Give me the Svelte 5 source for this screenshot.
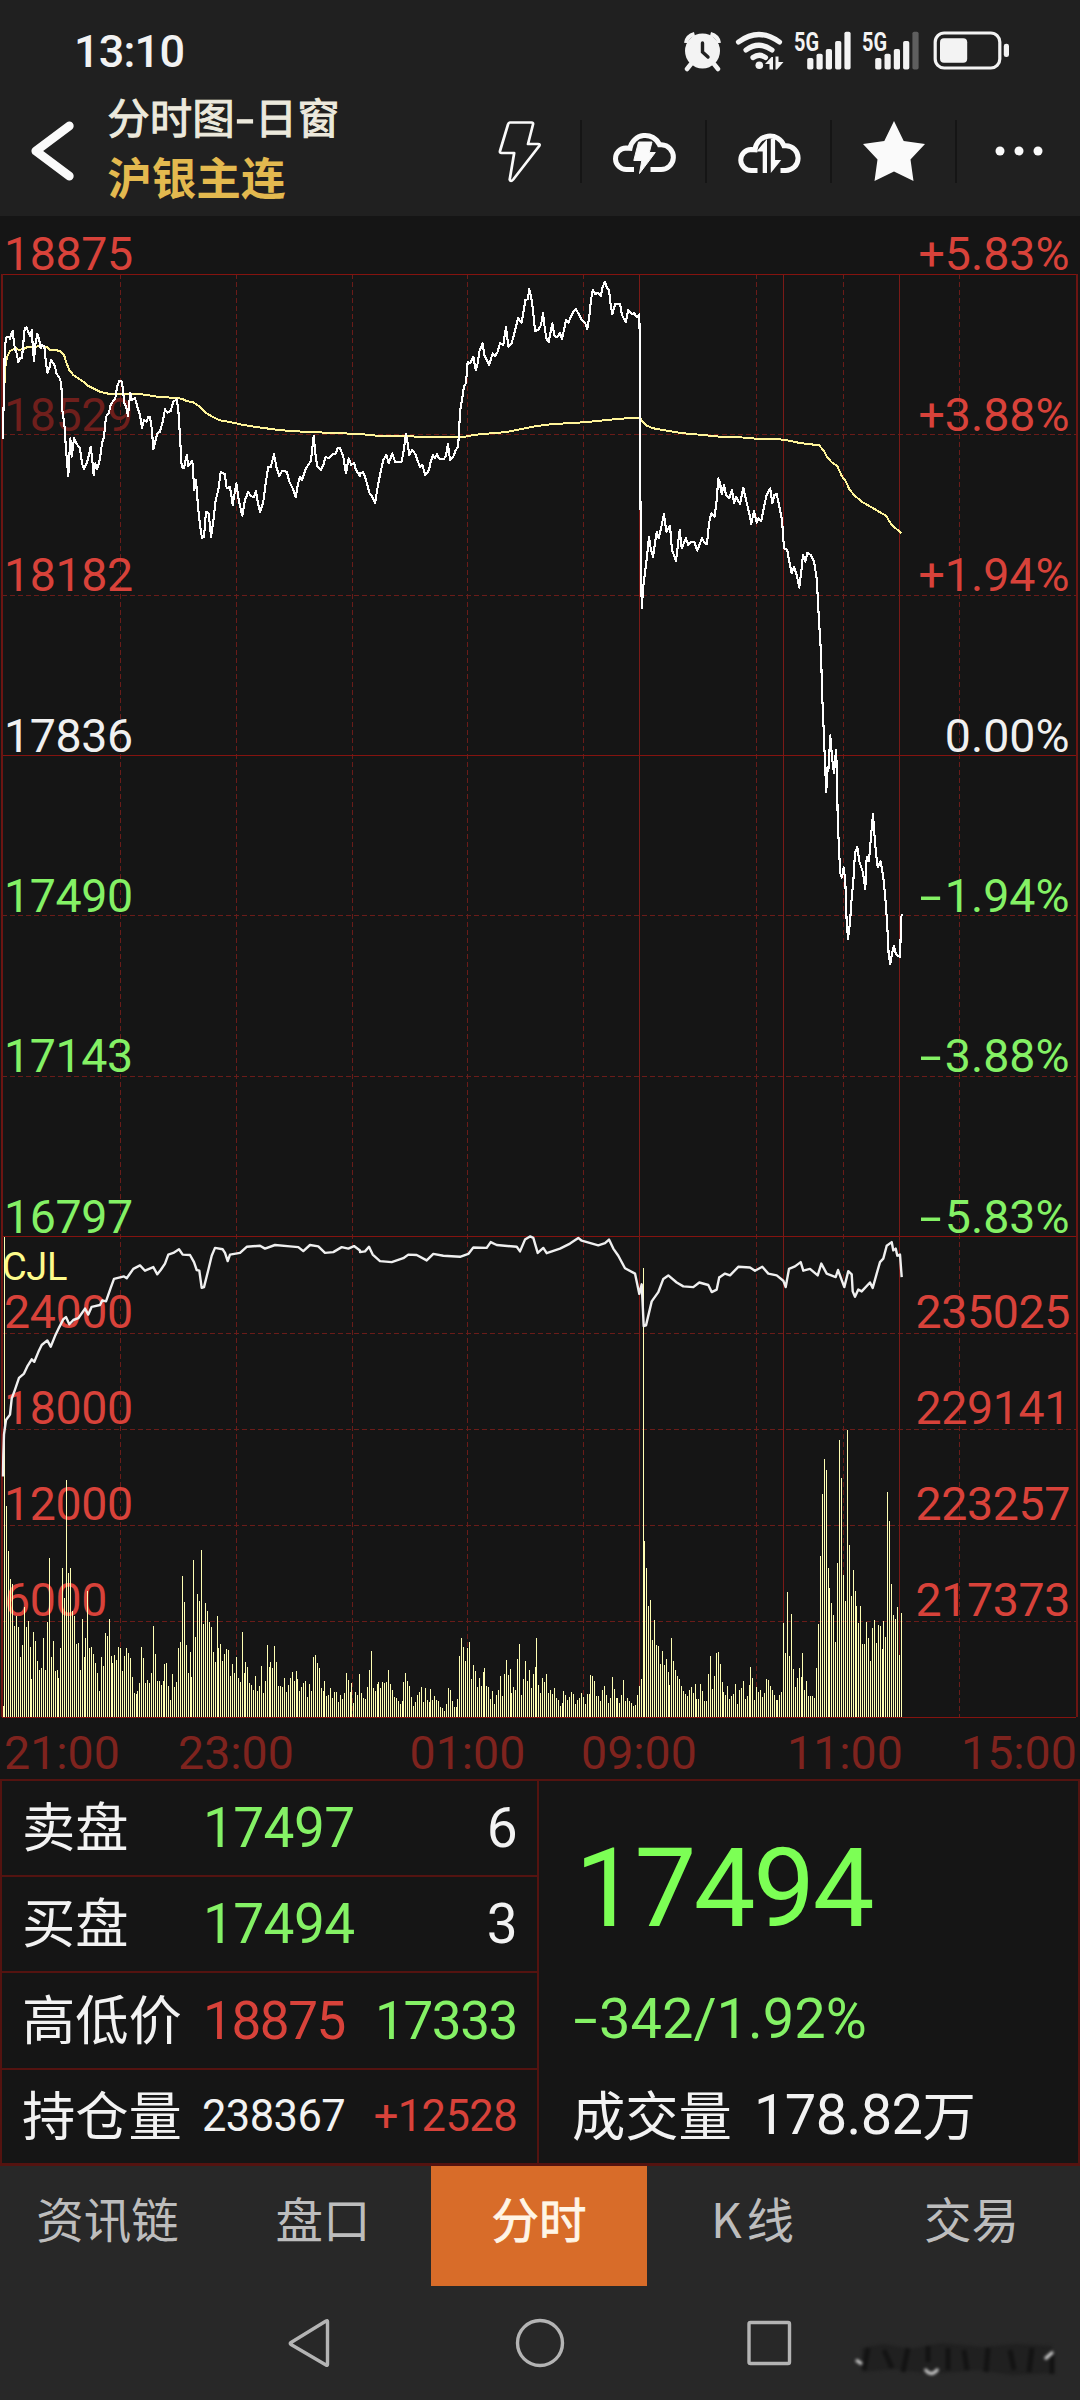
<script lang="ts">
  /* Intraday quote screen: header toolbar, price + volume chart, quote table, tabs. */
  const rows = [
    { y: 274, price: "18875", pct: "+5.83%", tone: "up" },
    { y: 434.5, price: "18529", pct: "+3.88%", tone: "up" },
    { y: 595, price: "18182", pct: "+1.94%", tone: "up" },
    { y: 755.5, price: "17836", pct: "0.00%", tone: "flat" },
    { y: 915.5, price: "17490", pct: "-1.94%", tone: "down" },
    { y: 1076, price: "17143", pct: "-3.88%", tone: "down" },
    { y: 1236.5, price: "16797", pct: "-5.83%", tone: "down" },
  ];
  const volRows = [
    { y: 1333, vol: "24000", oi: "235025" },
    { y: 1429, vol: "18000", oi: "229141" },
    { y: 1525, vol: "12000", oi: "223257" },
    { y: 1621, vol: "6000", oi: "217373" },
  ];
  const times = [
    { x: 62, t: "21:00" },
    { x: 236, t: "23:00" },
    { x: 467.5, t: "01:00" },
    { x: 639, t: "09:00" },
    { x: 845, t: "11:00" },
    { x: 1019, t: "15:00" },
  ];
  const dashedX = [120.5, 236.5, 352, 467.5, 583.5, 756.5, 843.5, 959.5];
  const solidX = [639.5, 783.5, 899.5];

  // each panel: [x offset, y offset, x scale, y scale, "x,y x,y ..."]
  type Panel = [number, number, number, number, string];
  const price: Panel[] = [
    [0, 220, 3, 3, "9,657 10,590 13,480 14,380 20,350 27,350 30,358 34,340 38,333 42,370 46,390 50,400 55,427 60,415 66,413 70,370 74,325 80,322 84,335 90,347 96,330 98,380 102,423 106,375 112,342 117,355 122,385 127,375 133,380 137,420 142,458 148,445 153,420 160,430 165,440 170,462 178,472 184,490 187,570 193,610 198,690 205,768 211,655 215,710 222,655 230,672 240,685 246,730 252,748 262,725 272,680 276,712 281,765 286,730 292,747 300,715 306,670 312,650 318,590 326,580 332,555 340,542 346,535 352,498 358,483 366,485 370,520 373,550 378,558 384,587 391,518 396,540 405,535 412,560 420,585 426,623 432,600 440,605 445,590 450,592 456,630 460,688 466,665 472,640 480,635 488,605 495,568 502,578 512,573 520,545 530,538 535,570 540,650 545,740 552,745 560,705 565,738 577,722 583,810 588,780 594,860 600,915 606,955 612,950 618,875 626,880 633,950 640,905 647,840 655,810 662,757 674,762 680,805 690,800 698,855 709,790 716,840 727,887 735,840 745,815 752,828 762,832 768,812 773,845 780,877 790,845 797,790 805,740 812,742 822,703 830,745 838,768 847,752 860,755 868,785 878,805 887,832 893,795 900,770 906,780 918,745 933,722 941,648 946,700 952,740 962,750 970,735 977,710 985,715 1000,702 1008,700 1012,685 1020,685 1030,710 1038,760 1046,715 1054,735 1062,728 1068,750 1080,768"],
    [360, 220, 3, 3, "0,760 10,757 18,780 28,818 36,828 45,850 54,795 62,755 70,720 79,705 86,730 97,700 105,725 125,725 131,690 138,643 143,670 148,705 156,690 166,702 172,720 180,740 187,735 196,766 207,750 212,725 219,705 224,715 231,703 236,715 250,718 257,710 264,672 270,720 280,710 287,690 294,682 297,640 300,575 306,540 312,500 318,490 323,425 331,430 340,410 347,450 353,430 358,395 368,370 373,405 380,420 387,435 398,400 405,408 413,395 420,370 430,375 438,320 445,380 455,370 463,340 474,295 485,308 490,280 496,240 503,238 508,207 514,235 519,270 525,333 535,330 543,315 549,280 555,330 560,360 566,366 571,340 577,310 583,345 590,352 600,340 606,357 613,325 618,300 625,308 633,290 640,275 647,267 655,280 665,300 675,308 682,327 688,290 693,240 698,210 706,222 715,218 722,228 728,200 735,185 741,205 747,210 752,255 757,282 766,252 780,252 786,285 797,307 805,270 815,282 822,280 832,292 838,283 840,400 841,800 845,1165 850,1100 858,1035 862,1000 867,950 872,985 879,1010 885,970 890,935 896,955 905,915 912,882 919,935 930,917 936,990 948,1023 953,980 959,930 965,985 978,955 985,975 993,965 1003,965 1012,992 1018,975 1026,955 1034,970 1041,972 1047,910 1054,880 1064,890 1070,840 1075,775 1080,800"],
    [720, 220, 3, 3, "0,785 5,822 12,795 18,825 28,835 36,810 42,850 48,830 60,852 70,803 78,840 88,880 94,912 102,873 110,908 116,895 124,903 132,860 140,825 151,805 157,850 163,825 170,822 178,860 186,900 192,985 202,990 208,1025 215,1060 222,1042 230,1065 238,1103 245,1045 249,1005 256,1025 262,998 272,1005 282,1025 290,1075"],
    [620, 600, 3, 2.45, "597,50 603,130 607,240 611,320 615,400 619,470 622,410 625,420 631,332 636,385 642,425 648,368 651,420 653,540 657,610 661,670 666,680 671,655 676,690 680,790 684,830 690,790 695,730 700,690 705,620 712,605 718,640 728,665 736,708 740,630 747,640 753,580 759,525 763,570 768,620 773,655 782,640 790,680 797,740 802,800 806,870 811,892 816,865 822,848 828,868 840,875 844,775 848,770"],
  ];
  const average: Panel[] = [
    [0, 220, 3, 3, "10,590 13,500 17,430 22,410 30,393 40,388 48,385 56,390 70,387 85,380 100,382 120,378 140,381 150,390 170,391 182,394 192,405 200,430 208,450 220,465 235,475 250,485 265,498 285,508 300,515 325,521 360,521 410,521 440,525 470,530 500,532 545,536 560,543 580,547 600,560 615,577 640,592 660,601 700,608 730,615 770,621 820,628 870,633 930,636 1000,639 1080,642"],
    [360, 220, 3, 3, "60,648 130,647 180,651 310,651 340,645 380,641 440,636 480,628 530,618 580,612 640,609 690,605 740,600 800,595 840,594 848,605 860,617 880,625 920,632 970,640 1030,645 1080,650"],
    [720, 220, 3, 3, "0,650 60,652 110,656 170,657 200,661 240,669 297,676 310,690 322,712 335,727 352,738 365,768 378,785 388,808 405,828 430,848 455,862 480,877 498,887 515,915 544,939"],
  ];
  const openInterest: Panel[] = [
    [0, 1220, 3, 2.8, "9,718 10,660 12,600 18,560 30,545 35,500 45,475 57,442 72,430 82,410 95,390 103,397 115,370 125,350 142,337 152,355 165,325 178,300 190,278 198,272 208,292 220,280 235,275 255,248 265,265 275,243 300,238 307,225 318,228 332,190 342,165 372,158 380,163 400,137 420,127 435,142 460,132 472,152 482,140 495,122 505,97 520,92 537,82 548,97 570,98 582,118 590,140 598,142 605,190 612,188 625,140 635,100 645,78 668,82 675,92 683,115 690,97 720,92 740,75 780,72 795,80 825,70 870,74 895,76 910,87 930,70 955,74 975,92 1000,90 1025,76 1045,80 1062,73 1080,85"],
    [360, 1220, 3, 2.8, "0,90 15,88 27,75 38,97 60,115 95,118 130,107 145,97 170,98 200,113 220,95 250,100 300,103 325,95 340,77 380,78 392,62 410,70 470,75 480,88 495,55 510,46 520,50 533,92 550,78 560,93 600,80 630,66 655,50 665,58 715,71 735,65 747,55 760,80 775,100 795,135 825,150 838,207 845,180 851,297 858,295 875,228 895,202 910,165 925,155 950,175 970,186 1000,188 1018,175 1045,182 1055,202 1070,195 1078,160"],
    [720, 1220, 3, 2.8, "0,160 15,150 30,155 55,131 90,133 105,142 127,131 145,150 170,155 190,170 197,188 207,137 225,130 242,118 250,142 270,137 293,155 304,122 320,150 347,160 354,140 373,188 385,143 395,152 398,200 405,215 415,195 425,200 450,175 458,190 470,150 480,118 490,108 500,72 515,62 520,85 527,80 532,100 540,97 545,160"],
  ];

  function trace(panels: Panel[]) {
    return panels
      .map(([ox, oy, sx, sy, pts]) =>
        pts
          .split(" ")
          .map((p) => {
            const [x, y] = p.split(",").map(Number);
            return `${(ox + x / sx).toFixed(1)},${(oy + y / sy).toFixed(1)}`;
          })
          .join(" ")
      )
      .join(" ");
  }

  // one entry per minute, distance of the bar top from the panel's ceiling
  const FLOOR = 1392;
  const tops = `1362 48 800 927 1005 1020 1138 1110 1140 1225 1190 1085 1140 1123 1195 1285 1153 1180 1235 1260 1255 1172 1260 1127 948 1223 1180 1262 1260 1282 1200 975 1058 728 990 975 1095 1108 1187 1184 1260 1117 1225 1172 1040 1198 1196 1215 1240 1270 1320 1225 1250 1156 1165 1117 1220 1240 1218 1232 1195 1200 1262 1220 1198 1212 1228 1280 1325 1327 1318 1296 1195 1228 1296 1288 1298 1270 1137 1215 1290 1290 1302 1292 1243 1240 1305 1343 1272 1307 1295 1198 1182 997 1070 1190 1270 1210 1280 952 1167 1047 1067 925 1131 1073 1095 1126 1140 1210 1238 1109 1200 1187 1235 1215 1201 1204 1276 1243 1268 1223 1282 1293 1153 1270 1238 1253 1297 1303 1315 1277 1318 1305 1249 1324 1291 1190 1253 1238 1254 1193 1238 1304 1304 1307 1282 1323 1302 1282 1267 1291 1263 1285 1318 1307 1296 1291 1335 1299 1318 1223 1218 1240 1255 1310 1318 1291 1333 1331 1310 1338 1322 1322 1349 1330 1341 1325 1268 1288 1322 1296 1352 1322 1330 1271
    1325 1338 1341 1308 1260 1207 1310 1318 1299 1294 1310 1294 1296 1294 1260 1299 1315 1336 1338 1347 1355 1347 1295 1269 1290 1304 1336 1361 1350 1330 1322 1308 1350 1310 1344 1350 1313 1344 1333 1344 1347 1364 1366 1375 1355 1310 1316 1347 1364 1364 1341 1221 1170 1196 1235 1198 1182 1285 1246 1263 1307 1282 1304 1266 1254 1304 1308 1341 1318 1355 1330 1316 1277 1333 1271 1232 1274 1257 1324 1308 1316 1229 1187 1330 1285 1235 1291 1260 1310 1271 1252 1170 1302 1324 1282 1294 1271 1324 1316 1327 1310 1338 1344 1361 1352 1318 1330 1344 1336 1322 1327 1355 1344 1338 1325 1336 1355 1327 1327 1274 1277 1291 1333 1333 1347 1316 1304 1330 1352 1338 1280 1313 1338 1338 1352 1330 1288 1347 1338 1347 1352 1361 1358 1330 1304 1285 134 899 974 1081 1065 1176 1120 1190 1193 1243 1207 1246 1229 1266 1302 1170 1235 1260 1277 1285 1304 1318 1327 1333 1316 1308 1324 1299 1341 1341 1299 1318 1347 1347 1271 1221 1313 1277 1212 1210
    1243 1294 1322 1330 1305 1341 1333 1327 1299 1355 1316 1310 1291 1341 1333 1302 1252 1282 1344 1308 1322 1316 1336 1324 1285 1288 1304 1316 1330 1344 1344 1330 1322 1128 1212 1042 1221 1103 1257 1308 1282 1254 1280 1212 1316 1291 1333 1333 1333 1338 1254 1131 941 767 669 700 975 1030 1072 1106 1182 960 616 722 994 1067 588 910 1053 980 1039 1081 1128 1081 1187 1187 1126 1170 1235 1142 1120 1184 1134 1137 1201 1123 1168 762 843 1020 1106 1117 1084 1218 1101`
    .split(/\s+/)
    .map(Number);
  const step = (901.3 - 3.07) / (tops.length - 1);
  const bars = tops
    .map((t, i) => `M${Math.floor(3.07 + i * step)} 1717v${-((FLOOR - t) / 2.8).toFixed(1)}h1V1717z`)
    .join("");

  const tabs = ["资讯链", "盘口", "分时", "K线", "交易"];
  let active = $state(2);
</script>

<div class="screen">
  <header>
    <div class="status">
      <span class="clock">13:10</span>
      <svg class="sys" width="340" height="44" viewBox="680 28 340 44" fill="#f3f3f3">
        <g>
          <circle cx="702.5" cy="51" r="17.5" />
          <path d="M686 43q1-7 8.500-9M719 43q-1-7-8.500-9" fill="none" stroke="#f3f3f3" stroke-width="4" />
          <path d="M691 64l-4 5M714 64l4 5" stroke="#f3f3f3" stroke-width="4.5" stroke-linecap="round" />
          <path d="M702.5 43v9l5.5 5" fill="none" stroke="#202020" stroke-width="3.4" stroke-linecap="round" />
        </g>
        <g fill="none" stroke="#f3f3f3" stroke-width="5.2" stroke-linecap="round">
          <path d="M738.5 42q20.500-15 41 0" />
          <path d="M746 50q13-9.500 26 0" />
          <path d="M753 57.500q6.500-4.500 12.500 0" />
        </g>
        <circle cx="759.3" cy="65.3" r="3.8" />
        <path d="M765 64l6.500-7h1.500V69.500h-3.500V64zM775.500 56.500h3v5.500h5l-6.500 7.500h-1.500z" />
        {#each [0, 68] as dx}
          <text class="fiveg" x={794 + dx} y="51" textLength="25" lengthAdjust="spacingAndGlyphs">5G</text>
          {#each [58, 53.7, 49, 41, 31.7] as top, i}
            <rect x={807.2 + dx + i * 9.3} y={top} width="6.2" height={69.5 - top} rx="1.8" fill={dx && i === 4 ? "#5e5e5e" : "#f3f3f3"} />
          {/each}
        {/each}
        <rect x="935.2" y="33" width="64.6" height="35" rx="9" fill="none" stroke="#f3f3f3" stroke-width="3.2" />
        <rect x="940" y="38.3" width="27.2" height="24.4" rx="4" />
        <rect x="1003.8" y="43.7" width="5.2" height="13.4" rx="2.4" />
      </svg>
    </div>

    <div class="bar">
      <svg class="back" width="50" height="66" viewBox="0 0 50 66">
        <path d="M43 7.500L9 33l34 25.500" fill="none" stroke="#fafafa" stroke-width="9" stroke-linecap="round" stroke-linejoin="round" />
      </svg>
      <div class="titles">
        <div class="mode">分时图<span>-</span>日窗</div>
        <div class="symbol">沪银主连</div>
      </div>
      <div class="tools">
        <button aria-label="闪电下单">
          <svg width="44" height="64" viewBox="498 119 44 64">
            <path d="M511 122.500h21.500q2 0 1.500 2l-5 19.500h10q2.500 0 1.200 2l-26 33.500q-2.500 3-3.500 0l4.500-26.500h-12.700q-2 0-1.500-2l8-26.500q.6-2 2-2z" fill="none" stroke="#fafafa" stroke-width="2.7" stroke-linejoin="round" />
          </svg>
        </button>
        <button aria-label="云条件单">
          <svg width="68" height="52" viewBox="610 126 68 52">
            <path d="M634 170.500h-7.500a10.700 10.700 0 0 1-.5-21.500l4 .3a15.500 15.500 0 0 1 29.500-3.500h2a12.300 12.300 0 0 1-1 24.700h-10" fill="none" stroke="#fafafa" stroke-width="5" />
            <path d="M638.500 143h13.500l-2.700 10.500h6l-15.800 21 2.300-13h-8z" fill="#fafafa" stroke="#fafafa" stroke-linejoin="round" />
          </svg>
        </button>
        <button aria-label="云止损">
          <svg width="68" height="52" viewBox="735.500 126 68 52">
            <path d="M758 171.500h-6a10.500 10.500 0 0 1-.5-21l4 .3a15 15 0 0 1 29-4h2a12.300 12.300 0 0 1-.5 24.700h-5" fill="none" stroke="#fafafa" stroke-width="5" />
            <path d="M767.500 140v34h-4.300v-21.500h-6.200zM771.3 140h4.300v21h6.200l-10.500 13z" fill="#fafafa" />
          </svg>
        </button>
        <button aria-label="自选">
          <svg width="64" height="62" viewBox="0 0 64 62">
            <path d="M32 1l9.700 20L63 24 48.500 39.500 51.500 61 32 51.500 12.500 61l3-21.500L1 24l21.300-3z" fill="#fafafa" />
          </svg>
        </button>
        <button aria-label="更多">
          <svg width="50" height="12" viewBox="0 0 50 12" fill="#fafafa">
            <circle cx="6" cy="6" r="4.5" /><circle cx="25" cy="6" r="4.5" /><circle cx="44" cy="6" r="4.5" />
          </svg>
        </button>
      </div>
    </div>
  </header>

  <svg class="chart" width="1080" height="1563" viewBox="0 216 1080 1563">
    <g class="dashed">
      {#each dashedX as x}<path d="M{x} 274V1717" />{/each}
      {#each [...rows.slice(1, 3), ...rows.slice(4, 6), ...volRows] as r}<path d="M2 {r.y}H1076" />{/each}
    </g>
    <g class="solid">
      {#each solidX as x}<path d="M{x} 274V1717" />{/each}
      {#each [274, 755.5, 1236.5, 1717] as y}<path class="main" d="M2 {y}H1076" />{/each}
      <path class="edge" d="M2 274V1717M1076.500 274V1717" />
    </g>

    <g class="labels">
      {#each rows as r, i}
        <text class={[r.tone, i === 1 && "dim"]} x="4" y={r.y - 4}>{r.price}</text>
        {#if r.tone === "down"}
          <text class={r.tone} x="919.500" y={r.y - 4} textLength="21.500" lengthAdjust="spacingAndGlyphs">-</text>
          <text class={[r.tone, "pct"]} x="1069.500" y={r.y - 4} text-anchor="end">{r.pct.slice(1)}</text>
        {:else}
          <text class={[r.tone, "pct"]} x="1069.500" y={r.y - 4} text-anchor="end">{r.pct}</text>
        {/if}
      {/each}
      {#each volRows as r}
        <text class="up" x="4" y={r.y - 5}>{r.vol}</text>
        <text class="up" x="1070" y={r.y - 5} text-anchor="end">{r.oi}</text>
      {/each}
      {#each times as t}
        <text class="time" x={t.x} y="1768.500" text-anchor="middle">{t.t}</text>
      {/each}
      <text class="cjl" x="2" y="1280">CJL</text>
    </g>

    <path class="bars" d={bars} />
    <polyline class="oi" points={trace(openInterest)} />
    <polyline class="avg" points={trace(average)} />
    <polyline class="price" points={trace(price)} />
  </svg>

  <section class="quote">
    <div class="book">
      <div class="row"><span class="k">卖盘</span><b class="down">17497</b><b class="end">6</b></div>
      <div class="row"><span class="k">买盘</span><b class="down">17494</b><b class="end">3</b></div>
      <div class="row mid"><span class="k">高低价</span><b class="up">18875</b><b class="end down">17333</b></div>
      <div class="row small"><span class="k">持仓量</span><b>238367</b><b class="end up">+12528</b></div>
    </div>
    <div class="last">
      <div class="now">17494</div>
      <div class="chg"><span class="minus">-</span>342/1.92%</div>
      <div class="turn"><span class="k">成交量</span><b>178.82</b><span class="k">万</span></div>
    </div>
  </section>

  <nav class="tabs">
    {#each tabs as tab, i}
      <button class:active={active === i} class:mixed={tab === "K线"} onclick={() => (active = i)}>{tab}</button>
    {/each}
  </nav>

  <div class="sysnav">
    <svg width="1080" height="114" viewBox="0 2286 1080 114" fill="none" stroke="#b4b4b4" stroke-width="3.4" stroke-linejoin="round">
      <path d="M327.500 2321.500v43q0 1.500-1.500.5l-35-20.500q-1.500-1 0-2l35-21.500q1.500-1 1.500.5z" />
      <circle cx="540" cy="2343" r="22.5" />
      <rect x="749" y="2322.500" width="40.500" height="41" rx="1.5" />
      <g class="smudge">
        <path d="M862 2348l22-4 26 5 32-6 40 4 34-3 36 2v27l-40 2-34-5-46 4-38-5-32 3z" />
        <path d="M868 2348l-4 22M884 2350l8 18M908 2348l-5 24M928 2346v16M948 2348v22M964 2350l3 20M988 2348l-2 24M1010 2350l4 20M1032 2348l-3 24M1052 2352v22" class="streak" />
        <path d="M856 2360l6 4M925 2369q6 9 13 0M1045 2359l8-7" class="glint" />
      </g>
    </svg>
  </div>
</div>

<style>
  :global(body) {
    margin: 0;
    background: #151515;
  }
  .screen {
    width: 1080px;
    height: 2400px;
    display: flex;
    flex-direction: column;
    overflow: hidden;
    background: #151515;
    color: #f2f2f2;
    font-family: Roboto, "Noto Sans CJK SC", sans-serif;
  }
  button {
    border: none;
    background: none;
    padding: 0;
    color: inherit;
    font: inherit;
  }
  header {
    height: 216px;
    flex: none;
    background: #202020;
  }
  .status {
    height: 86px;
    display: flex;
    justify-content: space-between;
    padding: 28px 60px 0 74px;
    box-sizing: border-box;
  }
  .clock {
    font-size: 45px;
    line-height: 47px;
    font-weight: 500;
    letter-spacing: -0.8px;
  }
  .fiveg {
    font-size: 25px;
    font-weight: 700;
  }
  .bar {
    height: 130px;
    display: flex;
    align-items: center;
  }
  .back {
    margin-left: 27px;
  }
  .titles {
    width: 354px;
    margin-left: 31px;
    white-space: nowrap;
  }
  .mode {
    font-size: 42.5px;
    line-height: 56px;
    padding-bottom: 2px;
    color: #ece9dc;
    -webkit-text-stroke: 1px #ece9dc;
  }
  .mode span {
    display: inline-block;
    width: 20px;
    text-align: center;
    transform: scaleX(1.45);
  }
  .symbol {
    font-size: 44.6px;
    line-height: 60px;
    font-weight: 700;
    color: #e3b94f;
  }
  .tools {
    display: flex;
    height: 63px;
  }
  .tools button {
    width: 125px;
    height: 63px;
    box-sizing: border-box;
    display: flex;
    align-items: center;
    justify-content: center;
    border-left: 2px solid #151515;
  }
  .tools button:first-child {
    border-left-color: transparent;
  }
  .chart {
    display: block;
    flex: none;
  }
  .dashed path,
  .solid path {
    fill: none;
    stroke-width: 1px;
    shape-rendering: crispEdges;
  }
  .dashed path {
    stroke: #6a1c19;
    stroke-dasharray: 5 3;
  }
  .solid path {
    stroke: #7a1a17;
  }
  .solid .main {
    stroke: #84130f;
  }
  .solid .edge {
    stroke: #6c1512;
    stroke-width: 2px;
  }
  .labels {
    font-size: 46.5px;
    letter-spacing: -0.4px;
  }
  .pct {
    letter-spacing: 0;
  }
  .up {
    color: #d8423a;
    fill: #d8423a;
  }
  .down {
    color: #84f165;
    fill: #84f165;
  }
  .flat {
    fill: #f0f0f0;
  }
  .dim {
    fill: #6f1f1c;
  }
  .time {
    fill: #7e231e;
    letter-spacing: 0;
  }
  .cjl {
    font-size: 38px;
    fill: #fdfb8b;
  }
  .bars {
    fill: #ffffb4;
    shape-rendering: crispEdges;
  }
  polyline {
    fill: none;
    stroke-linejoin: round;
  }
  .price {
    stroke: #fff;
    stroke-width: 2.1px;
    shape-rendering: crispEdges;
  }
  .oi {
    stroke: #f0f0f0;
    stroke-width: 2.4px;
  }
  .avg {
    stroke: #fff59a;
    stroke-width: 2px;
    shape-rendering: crispEdges;
  }
  .quote {
    height: 387px;
    flex: none;
    box-sizing: border-box;
    display: flex;
    border: 2px solid #541310;
    border-bottom-width: 3px;
    white-space: nowrap;
  }
  .quote b {
    font-weight: 400;
    letter-spacing: -0.6px;
  }
  .k {
    font-size: 53.3px;
    font-family: "Noto Sans CJK SC", sans-serif;
  }
  .book {
    width: 535px;
    border-right: 2px solid #541310;
    display: grid;
    grid-template-rows: 94px 96px 97px 1fr;
  }
  .row {
    display: grid;
    grid-template-columns: 181px auto 1fr;
    align-items: center;
    padding: 0 20px;
    line-height: 90px;
    font-size: 55px;
  }
  .row + .row {
    border-top: 2px solid #541310;
  }
  .row .k {
    line-height: 82px;
    padding-bottom: 8px;
  }
  .row .end {
    text-align: right;
  }
  .row.mid b {
    font-size: 53px;
    letter-spacing: -1.4px;
  }
  .small {
    font-size: 43.5px;
    grid-template-columns: 180px auto 1fr;
  }
  .last {
    flex: 1;
    padding-left: 33px;
  }
  .now {
    height: 168px;
    padding-left: 3px;
    font-size: 110px;
    line-height: 215px;
    letter-spacing: -2.4px;
    color: #7cff55;
  }
  .chg {
    display: flex;
    align-items: center;
    height: 139px;
    font-size: 56px;
    color: #84f165;
  }
  .minus {
    width: 27px;
    text-align: center;
    transform: scaleX(1.55);
  }
  .turn {
    display: flex;
    align-items: center;
    height: 54px;
    font-size: 56px;
  }
  .turn .k {
    padding-bottom: 6px;
  }
  .turn b {
    margin-left: 22px;
  }
  .tabs {
    height: 120px;
    flex: none;
    display: grid;
    grid-template-columns: 215px 216px 216px 216px 217px;
    background: #282828;
    color: #bdbdbd;
    font-size: 47.5px;
  }
  .tabs button {
    padding-bottom: 17px;
  }
  .tabs .active {
    background: #d86c29;
    color: #fff5e6;
    -webkit-text-stroke: 0.8px #fff5e6;
  }
  .tabs .mixed {
    font-family: "Noto Sans CJK SC", sans-serif;
    letter-spacing: 5px;
  }
  .sysnav {
    height: 114px;
    background: #282828;
  }
  .sysnav svg {
    display: block;
  }
  .smudge {
    stroke: none;
    fill: #202020;
    filter: blur(1.6px);
  }
  .streak {
    stroke: #131313;
    stroke-width: 5px;
  }
  .glint {
    stroke: #d8d8d8;
    stroke-width: 3px;
    fill: none;
  }
</style>
